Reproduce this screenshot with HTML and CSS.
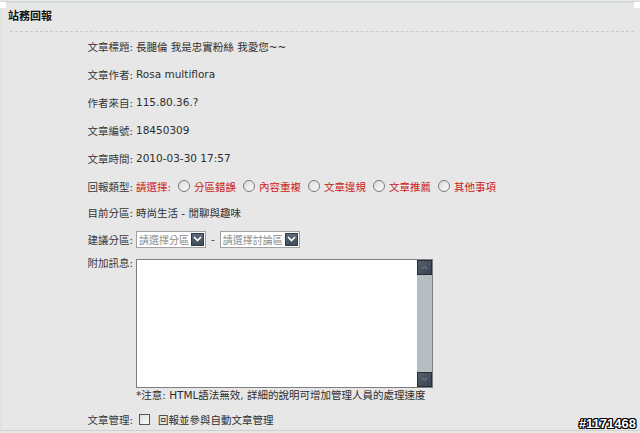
FILE: index.html
```html
<!DOCTYPE html>
<html lang="zh-Hant">
  <head>
    <meta charset="UTF-8" />
    <link rel="stylesheet" href="styles.css">
  </head>
  <body>
    <div class="panel">
      <span class="corner corner-left"></span>
      <span class="corner corner-right"></span>
      <h1>站務回報</h1>

      <div class="row">
        <label>文章標題:</label>
        <div class="value">長腿倫 我是忠實粉絲 我愛您~~</div>
      </div>
      <div class="row">
        <label>文章作者:</label>
        <div class="value">Rosa multiflora</div>
      </div>
      <div class="row">
        <label>作者來自:</label>
        <div class="value">115.80.36.?</div>
      </div>
      <div class="row">
        <label>文章編號:</label>
        <div class="value">18450309</div>
      </div>
      <div class="row">
        <label>文章時間:</label>
        <div class="value">2010-03-30 17:57</div>
      </div>
      <div class="row">
        <label>回報類型:</label>
        <div class="value report-types">
          <span>請選擇:</span>
          <span class="radio"></span><span>分區錯誤</span>
          <span class="radio"></span><span>內容重複</span>
          <span class="radio"></span><span>文章違規</span>
          <span class="radio"></span><span>文章推薦</span>
          <span class="radio"></span><span>其他事項</span>
        </div>
      </div>
      <div class="row row-current">
        <label>目前分區:</label>
        <div class="value">時尚生活 - 閒聊與趣味</div>
      </div>
      <div class="row">
        <label>建議分區:</label>
        <div class="value selects">
          <div class="select">
            <span class="select-text">請選擇分區</span>
            <span class="select-btn"><svg width="9" height="6" viewBox="0 0 9 6"><path d="M1 1 L4.5 4.5 L8 1" fill="none" stroke="#fff" stroke-width="1.6"/></svg></span>
          </div>
          <span class="dash">-</span>
          <div class="select">
            <span class="select-text">請選擇討論區</span>
            <span class="select-btn"><svg width="9" height="6" viewBox="0 0 9 6"><path d="M1 1 L4.5 4.5 L8 1" fill="none" stroke="#fff" stroke-width="1.6"/></svg></span>
          </div>
        </div>
      </div>
      <div class="row row-message">
        <label>附加訊息:</label>
        <div class="value">
          <div class="msg-box">
            <textarea></textarea>
            <div class="scrollbar">
              <span class="sb-btn"><svg width="7" height="5" viewBox="0 0 7 5"><path d="M1 4 L3.5 1.5 L6 4" fill="none" stroke="#7d8894" stroke-width="1"/></svg></span>
              <span class="sb-track"></span>
              <span class="sb-btn"><svg width="7" height="5" viewBox="0 0 7 5"><path d="M1 1 L3.5 3.5 L6 1" fill="none" stroke="#7d8894" stroke-width="1"/></svg></span>
            </div>
          </div>
          <div class="note">*注意: HTML語法無效, 詳細的說明可增加管理人員的處理速度</div>
        </div>
      </div>
      <div class="row row-manage">
        <label>文章管理:</label>
        <div class="value">
          <span class="checkbox"></span>
          <span>回報並參與自動文章管理</span>
        </div>
      </div>
    </div>
    <div class="stamp">#1171468</div>
  </body>
</html>
```

FILE: styles.css
```css
:root {
  --label-width: 131px;
  --row-height: 28px;
  --text-color: #2e2e2e;
  --report-red: #cc1a1a;
}

body {
  margin: 0;
  padding-top: 1px;
  height: 432px;
  overflow: hidden;
  position: relative;
  background-color: #e7e7e7;
  color: var(--text-color);
  font-family: "DejaVu Sans", "Noto Sans CJK TC", sans-serif;
  font-size: 10.5px;
}

.panel {
  position: relative;
  border-top: 2px solid #d2dcd2;
  border-left: 2px solid #dbe5db;
  border-bottom: 1px solid #cfcfcf;
}

.corner {
  position: absolute;
  top: -1px;
  width: 6px;
  height: 6px;
  background: #fff;
}

.corner-left {
  left: -2px;
}

.corner-right {
  right: 0;
}

h1 {
  margin: 0 6px 0 8px;
  text-indent: -2px;
  line-height: 28px;
  font-size: 11px;
  font-weight: bold;
  color: #111;
  border-bottom: 1px dashed #c4cec4;
}

.row {
  display: grid;
  grid-template-columns: var(--label-width) 1fr;
  column-gap: 3px;
  align-items: center;
  height: var(--row-height);
}

.row-current {
  height: 25px;
}

label {
  text-align: right;
  color: #383838;
}

.value {
  display: flex;
  align-items: center;
  white-space: nowrap;
}

.report-types {
  color: var(--report-red);
}

.radio {
  width: 10px;
  height: 10px;
  margin: 0 4px 0 7px;
  border: 1px solid #7a7a7a;
  border-radius: 50%;
  background: linear-gradient(135deg, #dcdcdc, #fafafa);
}

.selects {
  gap: 5px;
}

.select {
  display: flex;
  align-items: center;
  height: 15px;
  border: 1px solid #a0a0a0;
  background: #fff;
}

.select-text {
  padding: 0 2px;
  font-size: 10px;
  color: #8a8a8a;
}

.select-btn {
  display: flex;
  align-items: center;
  justify-content: center;
  width: 13px;
  height: 13px;
  margin-right: 1px;
  background: linear-gradient(#5d6b7b, #3f4c5a);
  border: 1px solid #2f3944;
  box-sizing: border-box;
}

.dash {
  color: #444;
}

.row-message {
  height: auto;
  align-items: start;
}

.row-message label {
  padding-top: 3px;
  line-height: 14px;
}

.row-message .value {
  display: block;
}

.msg-box {
  display: flex;
  width: 295px;
  height: 127px;
  margin-top: 6px;
  border: 1px solid #7f7f7f;
  background: #fff;
}

textarea {
  flex: 1;
  border: none;
  outline: none;
  resize: none;
  background: transparent;
}

.scrollbar {
  display: flex;
  flex-direction: column;
  width: 15px;
  background: #b4bec3;
}

.sb-btn {
  display: flex;
  align-items: center;
  justify-content: center;
  height: 15px;
  box-sizing: border-box;
  border: 1px solid #262d35;
  background: linear-gradient(135deg, #56616d, #3a4450);
}

.sb-track {
  flex: 1;
}

.note {
  line-height: 14px;
}

.row-manage {
  height: 22px;
  margin-top: 6px;
}

.checkbox {
  width: 9px;
  height: 9px;
  margin: 0 8px 0 3px;
  border: 1px solid #555;
  background: linear-gradient(135deg, #dedede, #fbfbfb);
}

.stamp {
  position: absolute;
  right: 4px;
  bottom: 2px;
  font-family: "Liberation Sans", sans-serif;
  font-size: 13px;
  font-weight: bold;
  color: #fff;
  text-shadow: 1px 0 0 #000, -1px 0 0 #000, 0 1px 0 #000, 0 -1px 0 #000,
    1px 1px 0 #000, -1px -1px 0 #000, 1px -1px 0 #000, -1px 1px 0 #000;
}
```
